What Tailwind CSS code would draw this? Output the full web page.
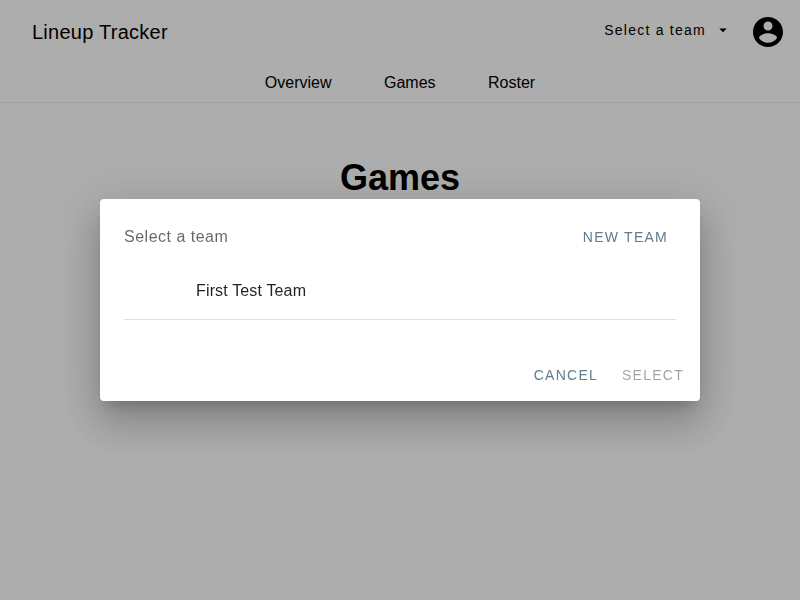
<!DOCTYPE html>
<html lang="en">
<head>
<meta charset="utf-8">
<title>Lineup Tracker</title>
<script src="https://cdn.jsdelivr.net/npm/@tailwindcss/browser@4"></script>
</head>
<body class="h-screen overflow-hidden bg-white font-['Liberation_Sans',Arial,sans-serif] text-black">
<header class="border-b border-[#eeeeee] h-[103px]">
  <div class="flex h-16 items-center pl-8 pr-[14px]">
    <h1 class="flex-1 text-xl leading-8 tracking-[0.25px]">Lineup Tracker</h1>
    <button class="mb-1 flex items-center text-sm tracking-[1.25px]">Select a team
      <svg class="ml-2 size-[18px]" viewBox="0 0 24 24"><path d="M7 10l5 5 5-5z"/></svg>
    </button>
    <svg class="ml-[18px] size-9" viewBox="0 0 24 24"><path d="M12 2C6.48 2 2 6.48 2 12s4.48 10 10 10 10-4.48 10-10S17.52 2 12 2zm0 3c1.66 0 3 1.34 3 3s-1.34 3-3 3-3-1.34-3-3 1.34-3 3-3zm0 14.2c-2.5 0-4.71-1.28-6-3.22.03-1.99 4-3.08 6-3.08 1.99 0 5.97 1.09 6 3.08-1.29 1.94-3.5 3.22-6 3.22z"/></svg>
  </div>
  <nav class="flex justify-center gap-[52.45px] pt-[7px] text-base leading-6">
    <a>Overview</a><a>Games</a><a>Roster</a>
  </nav>
</header>
<main class="pt-[53px] text-center"><h2 class="text-4xl leading-[43px] font-bold">Games</h2></main>
<div class="fixed inset-0 flex items-center justify-center bg-black/32">
  <section role="dialog" class="flex h-[202px] w-[600px] flex-col rounded bg-white shadow-[0_11px_15px_-7px_rgba(0,0,0,0.2),0_24px_38px_3px_rgba(0,0,0,0.14),0_9px_46px_8px_rgba(0,0,0,0.12)]">
    <div class="flex h-[72px] items-center justify-between pt-1 pl-6 pr-8">
      <span class="text-base tracking-[0.5px] text-black/60">Select a team</span>
      <button class="text-sm tracking-[1.25px] text-[#607d8b]">NEW TEAM</button>
    </div>
    <div class="mx-6 flex h-[49px] items-start border-b border-black/12 pt-2 pl-[72px] text-base tracking-[0.15px] text-black/87">First Test Team</div>
    <div class="mt-auto flex h-[52px] items-center justify-end gap-6 pr-4 text-sm tracking-[1.25px]">
      <button class="text-[#607d8b]">CANCEL</button>
      <button class="text-black/37">SELECT</button>
    </div>
  </section>
</div>
</body>
</html>
